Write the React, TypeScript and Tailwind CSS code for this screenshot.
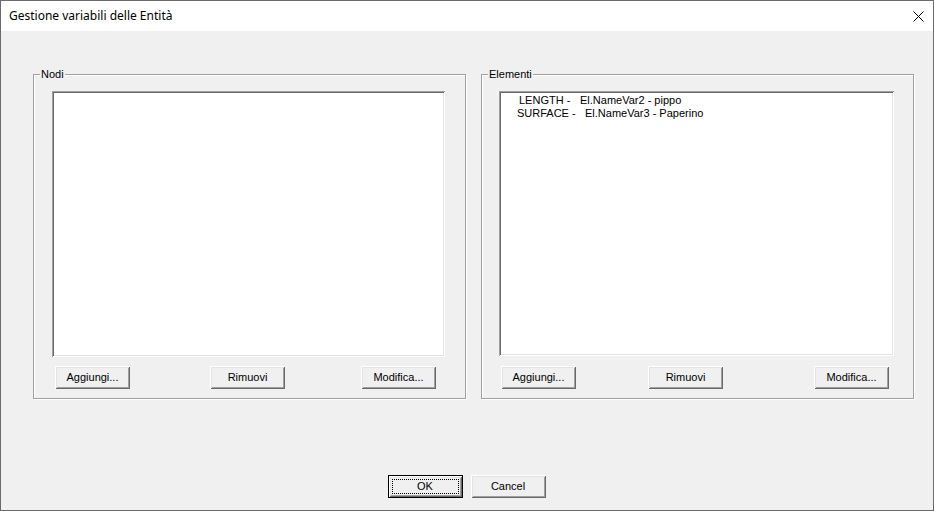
import React from "react";

const raised =
  "shadow-[inset_1px_1px_0_#ffffff,inset_-1px_-1px_0_#696969,inset_2px_2px_0_#e3e3e3,inset_-2px_-2px_0_#a0a0a0]";
const sunken =
  "shadow-[inset_1px_1px_0_#a0a0a0,inset_-1px_-1px_0_#ffffff,inset_2px_2px_0_#696969,inset_-2px_-2px_0_#e3e3e3]";

function Btn({ label, className = "" }: { label: string; className?: string }) {
  return (
    <div
      className={`w-[75px] h-[23px] shrink-0 bg-[#f0f0f0] flex items-center justify-center text-[11px] text-black ${raised} ${className}`}
    >
      {label}
    </div>
  );
}

function Group({
  title,
  children,
  className = "",
}: {
  title: string;
  children: React.ReactNode;
  className?: string;
}) {
  return (
    <div
      className={`relative w-[433px] h-[325px] border border-[#a0a0a0] shadow-[inset_1px_1px_0_#ffffff,1px_1px_0_#ffffff] ${className}`}
    >
      <span className="absolute left-[6px] top-[-8px] bg-[#f0f0f0] px-px leading-[14px] text-[11px] text-black">
        {title}
      </span>
      {children}
    </div>
  );
}

export default function App() {
  return (
    <div
      className="w-[934px] h-[511px] border border-[#6b6b6b] bg-[#f0f0f0] flex flex-col overflow-hidden"
      style={{ fontFamily: '"Liberation Sans", Arial, sans-serif' }}
    >
      <div className="h-[30px] bg-white flex items-center justify-between shrink-0">
        <span
          className="pl-[8px] text-[12px] text-black"
          style={{ fontFamily: '"Noto Sans", "Open Sans", sans-serif' }}
        >
          Gestione variabili delle Entità
        </span>
        <svg width="11" height="11" viewBox="0 0 11 11" className="mr-[9px]">
          <path d="M0.5 0.5 L10.5 10.5 M10.5 0.5 L0.5 10.5" stroke="#000" strokeWidth="1" />
        </svg>
      </div>

      <div className="flex-1 flex flex-col">
        <div className="flex pt-[43px] pl-[32px] gap-[15px]">
          <Group title="Nodi">
            <div className="flex flex-col pt-[16px] pl-[18px]">
              <div className={`w-[393px] h-[266px] bg-white ${sunken}`} />
              <div className="flex mt-[9px]">
                <Btn label="Aggiungi..." className="ml-[3px]" />
                <Btn label="Rimuovi" className="ml-[80px]" />
                <Btn label="Modifica..." className="ml-[76px]" />
              </div>
            </div>
          </Group>
          <Group title="Elementi">
            <div className="flex flex-col pt-[16px] pl-[17px]">
              <div className={`w-[395px] h-[265px] bg-white ${sunken} pt-[3px] text-[11px] text-black leading-[13px]`}>
                <div className="flex">
                  <span className="ml-[20px] w-[61px] whitespace-pre">LENGTH -</span>
                  <span className="whitespace-pre">El.NameVar2 - pippo</span>
                </div>
                <div className="flex">
                  <span className="ml-[18px] w-[68px] whitespace-pre">SURFACE -</span>
                  <span className="whitespace-pre">El.NameVar3 - Paperino</span>
                </div>
              </div>
              <div className="flex mt-[10px]">
                <Btn label="Aggiungi..." className="ml-[2px]" />
                <Btn label="Rimuovi" className="ml-[72px]" />
                <Btn label="Modifica..." className="ml-[91px]" />
              </div>
            </div>
          </Group>
        </div>

        <div className="flex justify-center gap-[8px] mt-[76px] pr-[1px]">
          <div className="relative w-[75px] h-[23px] border border-black bg-[#f0f0f0] flex items-center justify-center text-[11px] text-black shadow-[inset_1px_1px_0_#ffffff,inset_-1px_-1px_0_#696969,inset_2px_2px_0_#e3e3e3,inset_-2px_-2px_0_#a0a0a0]">
            OK
            <span className="absolute inset-[3px] border border-dotted border-black" />
          </div>
          <Btn label="Cancel" />
        </div>
      </div>
    </div>
  );
}
